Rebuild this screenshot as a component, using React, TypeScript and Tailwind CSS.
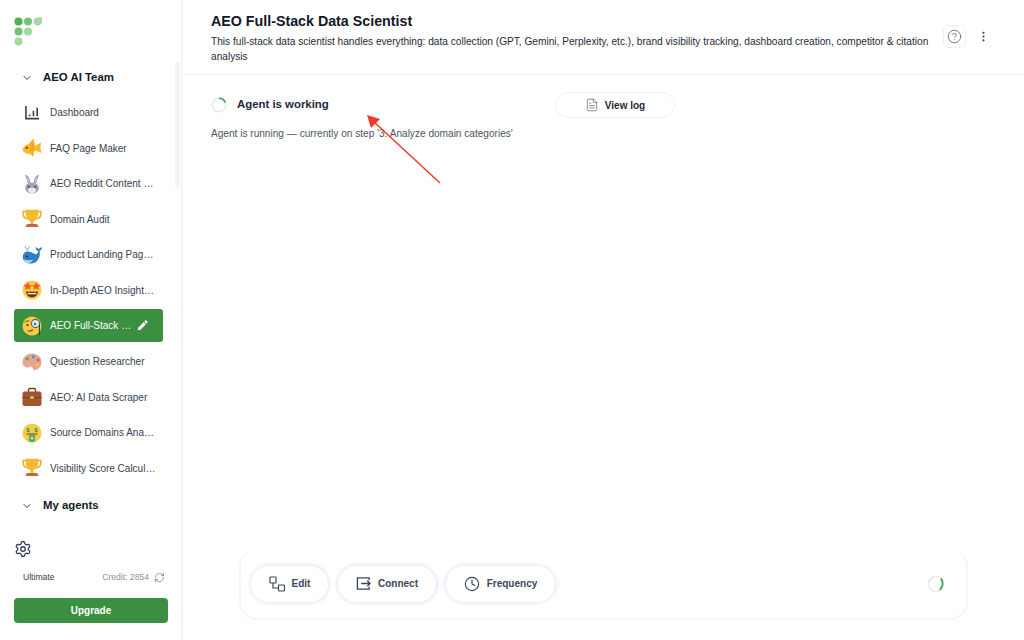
import { ChevronDown, Clock, FileText, RefreshCw, Settings, MoreVertical, CircleHelp } from "lucide-react";
import { type ReactNode } from "react";

const Face = ({ children }: { children: ReactNode }) => (
  <svg viewBox="0 0 20 20" className="w-[20px] h-[20px]">
    <circle cx="10" cy="10" r="9.500" fill="#fbc94b" />
    {children}
  </svg>
);

const Trophy = () => (
  <svg viewBox="0 0 20 20" className="w-[20px] h-[20px]">
    <path d="M4 2.500H1.200v2.500c0 3 2 4.500 5 5M16 2.500h2.800v2.500c0 3-2 4.500-5 5" fill="none" stroke="#f5ae2b" strokeWidth="1.700" />
    <path d="M3.500 .8h13c0 6-1.200 10-5 11.500v2.700h-3v-2.700c-3.800-1.500-5-5.500-5-11.500z" fill="#fab732" />
    <path d="M6 15h8c1.300 0 2.200 1.200 2.300 3H3.700c.1-1.800 1-3 2.300-3z" fill="#bd6a42" />
  </svg>
);

const Fish = () => (
  <svg viewBox="0 0 20 20" className="w-[20px] h-[20px]">
    <path d="M7 5.500 11.500 .8l1.500 7zM8 15l3 4 1.200-6z" fill="#f9a825" />
    <path d="M.5 11.500C2.500 6 9 3.500 13 8L19 4.500c-.8 3.500-.6 7 .8 10.500L13.500 12.500C9.500 18 2.500 16.500 .5 11.500z" fill="#fdb92e" />
    <path d="M8.500 7l2.500 2M7.500 10l3.500 1M8 13l3-1M10.500 6.500l1 5" stroke="#ee8d16" strokeWidth=".9" fill="none" />
    <circle cx="4.800" cy="9.800" r="1.100" fill="#5a3a12" />
  </svg>
);

const Rabbit = () => (
  <svg viewBox="0 0 20 20" className="w-[20px] h-[20px]">
    <path d="M6 9.500 3 .5c3 .8 5 3.500 5.300 8zM14 9.500 17 .5c-3 .8-5 3.500-5.300 8z" fill="#98a1ae" />
    <path d="M6.500 8 4.500 2.500c1.800 1 2.900 3 3 5.300zM13.500 8 15.500 2.500c-1.800 1-2.900 3-3 5.300z" fill="#e8bdb8" />
    <ellipse cx="10" cy="14" rx="6.800" ry="5.600" fill="#9aa3b0" />
    <ellipse cx="10" cy="16.300" rx="3.800" ry="2.800" fill="#eceef1" />
    <circle cx="6.800" cy="12.800" r=".9" fill="#2b2f36" />
    <circle cx="13.200" cy="12.800" r=".9" fill="#2b2f36" />
    <path d="M9 14.500h2l-1 1z" fill="#d98f8f" />
  </svg>
);

const Whale = () => (
  <svg viewBox="0 0 20 20" className="w-[20px] h-[20px]">
    <path d="M.8 12C.8 8 3.500 6.500 6.500 6.500c3.500 0 6 3.500 8 2.500 1.500-.7 1.800-2.500 1.500-4h1.300c1.700 5-.8 13.500-8.300 13.500-5 0-8.200-2.500-8.200-6.500z" fill="#2f7fc4" />
    <path d="M13.500 2.500c1.500 0 2.500 .5 3.200 1.700 .6-1.200 1.600-1.700 3.300-1.700-.2 2.300-1.500 3.500-3.300 3.500-1.700 0-2.900-1.200-3.200-3.500z" fill="#2f7fc4" />
    <path d="M3 1.200c.2 1.500 1 2.500 2.300 3 1.300-.5 2.100-1.500 2.300-3M5.300 4.200v1.800" stroke="#7cc0ee" strokeWidth="1.100" fill="none" />
    <path d="M1.500 14c2.500 1.500 6.500 1.800 9.500 .5-1.500 3-4 4.100-6 3.700-1.500-.4-2.800-2.200-3.500-4.200z" fill="#a9d6f5" />
    <circle cx="5" cy="11.500" r="1" fill="#12263a" />
  </svg>
);

const StarFace = () => (
  <Face>
    <path d="M10 11.500c2.500 .4 4.700 .3 6-.2-.5 4-3 6-6 6s-5.500-2-6-6c1.300 .5 3.500 .6 6 .2z" fill="#5b3512" />
    <path d="M5.500 12.700c3 .5 6 .5 9 0l-.5 1.500h-8z" fill="#fff" />
    <path d="M5.800 1.800l1.300 2.900 3.100 .3-2.300 2.100 .7 3-2.800-1.600L3 10.100l.7-3L1.400 5l3.100-.3zM14.200 1.800l1.300 2.900 3.100 .3-2.300 2.100 .7 3-2.800-1.600-2.800 1.600 .7-3L9.800 5l3.100-.3z" fill="#ef5f2b" />
  </Face>
);

const Monocle = () => (
  <svg viewBox="0 0 20 20" className="w-[20px] h-[20px]">
    <circle cx="10" cy="10" r="9.500" fill="#fbc94b" />
    <path d="M2.500 6.500c1-1.500 3-2 4.800-1.300" stroke="#7a4d12" strokeWidth="1" fill="none" />
    <circle cx="5.500" cy="9" r="1.100" fill="#4a3212" />
    <circle cx="13.500" cy="7.500" r="4.100" fill="#cfe9f6" stroke="#66614f" strokeWidth="1.100" />
    <circle cx="13" cy="8" r="1" fill="#4a3212" />
    <path d="M17.400 8.500v10.500" stroke="#33302a" strokeWidth="1" />
    <path d="M5.500 14.800c1.800 .5 4 .2 5.500-1" stroke="#7a4d12" strokeWidth="1.100" fill="none" />
  </svg>
);

const Palette = () => (
  <svg viewBox="0 0 20 20" className="w-[20px] h-[20px]">
    <path d="M10 1.500c5.500 0 9.500 3.700 9.500 8.500s-3.500 8-7 8c-2 0-1.500-2.300-2.500-3.300-1.500-1.200-3.500 1.500-6 .5C1.500 14 .5 12.500 .5 10.500 .5 5.500 4.500 1.500 10 1.500z" fill="#e5a68f" />
    <circle cx="5.300" cy="6.700" r="1.500" fill="#4fae4a" />
    <circle cx="11.300" cy="4.800" r="1.500" fill="#3d8fd8" />
    <circle cx="16" cy="8" r="1.500" fill="#e8503f" />
    <circle cx="15.300" cy="13" r="1.600" fill="#f7c33f" />
  </svg>
);

const Briefcase = () => (
  <svg viewBox="0 0 20 20" className="w-[20px] h-[20px]">
    <path d="M6.500 5V2.800c0-.7 .5-1.300 1.300-1.300h4.400c.8 0 1.300 .6 1.300 1.300V5" fill="none" stroke="#7a3f1c" strokeWidth="1.400" />
    <rect x=".5" y="4.500" width="19" height="14.500" rx="2" fill="#a5562a" />
    <rect x=".5" y="10" width="19" height="1" fill="#7a3b1e" />
    <rect x="8.200" y="9.500" width="3.600" height="2" rx=".4" fill="#eed6a8" />
  </svg>
);

const MoneyFace = () => (
  <Face>
    <text x="6" y="8.500" fontSize="6" fontWeight="700" fill="#2f8f46" textAnchor="middle" fontFamily="Liberation Sans">$</text>
    <text x="14" y="8.500" fontSize="6" fontWeight="700" fill="#2f8f46" textAnchor="middle" fontFamily="Liberation Sans">$</text>
    <path d="M4.500 11h11" stroke="#6b3c12" strokeWidth="1" />
    <rect x="7" y="11" width="6" height="8" rx="1.500" fill="#4eb05b" />
    <circle cx="10" cy="15" r="1.500" fill="#bfe8c2" />
  </Face>
);

// the little bar chart used for the Dashboard row
const DashboardGlyph = () => (
  <svg viewBox="0 0 16 16" className="w-[15px] h-[15px] text-[#374151]" fill="none" stroke="currentColor" strokeWidth="1.700">
    <path d="M1 1v13.500h14" />
    <path d="M5 12v-2M9 12V6M13 12V3" />
  </svg>
);

const PencilGlyph = () => (
  <svg viewBox="0 0 12 12" className="ml-[6px] w-[11px] h-[11px] shrink-0" fill="currentColor">
    <path d="M.8 11.200l.7-3.100 5.800-5.800 2.400 2.400-5.800 5.800zM8 1.600l.9-.9c.4-.4 1-.4 1.400 0l1 1c.4 .4 .4 1 0 1.400l-.9 .9z" />
  </svg>
);

const nav: { label: string; icon: ReactNode; active?: boolean }[] = [
  { label: "Dashboard", icon: <DashboardGlyph /> },
  { label: "FAQ Page Maker", icon: <Fish /> },
  { label: "AEO Reddit Content …", icon: <Rabbit /> },
  { label: "Domain Audit", icon: <Trophy /> },
  { label: "Product Landing Pag…", icon: <Whale /> },
  { label: "In-Depth AEO Insight…", icon: <StarFace /> },
  { label: "AEO Full-Stack …", icon: <Monocle />, active: true },
  { label: "Question Researcher", icon: <Palette /> },
  { label: "AEO: AI Data Scraper", icon: <Briefcase /> },
  { label: "Source Domains Ana…", icon: <MoneyFace /> },
  { label: "Visibility Score Calcul…", icon: <Trophy /> },
];

const Logo = () => (
  <svg viewBox="0 0 30 32" className="w-[30px] h-[32px]">
    <circle cx="4.500" cy="4.500" r="4" fill="#4caf50" />
    <circle cx="14" cy="4.500" r="4" fill="#74c278" />
    <path d="M19.500 4.500C19.500 2 21.500 .5 24 .5h4v4c0 2.300-1.800 4-4.200 4s-4.300-1.700-4.300-4z" fill="#a3d8a5" />
    <circle cx="4.500" cy="14.500" r="4" fill="#74c278" />
    <circle cx="14" cy="14.500" r="4" fill="#a3d8a5" />
    <circle cx="4.500" cy="24.500" r="4" fill="#a3d8a5" />
  </svg>
);

function Spinner({ size, arc }: { size: number; arc: string }) {
  return (
    <svg width={size} height={size} viewBox="0 0 20 20">
      <circle cx="10" cy="10" r="8.500" fill="none" stroke="#e8eaee" strokeWidth="1.800" />
      <path d={arc} fill="none" stroke="#34a853" strokeWidth="2" />
    </svg>
  );
}

const EditGlyph = () => (
  <svg viewBox="0 0 16 16" className="w-[16px] h-[16px]" fill="none" stroke="currentColor" strokeWidth="1.200">
    <rect x="1" y="1" width="6" height="6" rx=".8" />
    <rect x="9.500" y="9" width="6" height="6" rx=".8" />
    <path d="M4 7v5h5.500" />
  </svg>
);

const ConnectGlyph = () => (
  <svg viewBox="0 0 16 16" className="w-[15px] h-[15px]" fill="none" stroke="currentColor" strokeWidth="1.400">
    <path d="M14 4.500V2H1.500v12H14v-2.500" />
    <path d="M5.500 8H15M12 5l3 3-3 3" />
  </svg>
);

function PillButton({ icon, label, width }: { icon: ReactNode; label: string; width: string }) {
  return (
    <button className={`${width} h-[36px] rounded-full bg-white shadow-[0_0_4px_1px_rgba(210,218,235,0.7)] flex items-center justify-center gap-[7px] text-[10px] font-bold text-[#3b4658]`}>
      {icon}
      {label}
    </button>
  );
}

function Sidebar() {
  return (
    <aside className="relative w-[183px] shrink-0 h-full flex flex-col border-r-2 border-[#f3f5fb] bg-white">
      <div className="pt-[17px] pl-[14px] h-[67px]">
        <Logo />
      </div>
      <div className="flex items-center h-[22px] pl-[21px] gap-[10px] text-[11.400px] font-bold text-[#111827]">
        <ChevronDown className="w-[12px] h-[12px] text-[#374151]" strokeWidth={2} />
        AEO AI Team
      </div>
      <nav className="mt-[7px] flex flex-col gap-[2.580px]">
        {nav.map((item) => (
          <div
            key={item.label}
            className={`mx-[14px] w-[149px] h-[33px] shrink-0 flex items-center rounded-[3px] pl-[8px] ${item.active ? "bg-[#3b8f41] text-white" : "text-[#374151]"}`}
          >
            <span className="w-[20px] flex justify-center shrink-0">{item.icon}</span>
            <span className="ml-[8px] text-[10px] whitespace-nowrap">{item.label}</span>
            {item.active && <PencilGlyph />}
          </div>
        ))}
      </nav>
      <div className="mt-[10px] flex items-center h-[22px] pl-[21px] gap-[10px] text-[11.400px] font-bold text-[#111827]">
        <ChevronDown className="w-[12px] h-[12px] text-[#374151]" strokeWidth={2} />
        My agents
      </div>
      <div className="mt-auto px-[14px] pb-[17px] -mr-[1px]">
        <Settings className="w-[18px] h-[18px] text-[#334155]" strokeWidth={1.800} />
        <div className="mt-[13px] flex items-center justify-between pl-[9px] pr-[3px] text-[8.600px]">
          <span className="text-[#374151]">Ultimate</span>
          <span className="flex items-center gap-[5px] text-[#8b93a1]">
            Credit: 2854
            <RefreshCw className="w-[11px] h-[11px] text-[#6b7280]" strokeWidth={1.500} />
          </span>
        </div>
        <button className="mt-[14px] w-full h-[25px] rounded-[4px] bg-[#3b8f41] text-white text-[10px] font-bold">Upgrade</button>
      </div>
      <div className="absolute right-[1px] top-[62px] w-[5px] h-[126px] rounded-full bg-[#f3f4f7]" />
    </aside>
  );
}

function Main() {
  return (
    <main className="relative flex-1 h-full flex flex-col">
      <header className="h-[75px] shrink-0 border-b border-[#f3f4f6] pl-[28px] pr-[34px] flex">
        <div className="flex-1 pt-[12px]">
          <h1 className="text-[14.250px] leading-[18px] font-bold text-[#111827]">AEO Full-Stack Data Scientist</h1>
          <p className="mt-[4px] w-[725px] text-[10.150px] leading-[15px] text-[#1f2937]">
            This full-stack data scientist handles everything: data collection (GPT, Gemini, Perplexity, etc.), brand visibility tracking, dashboard creation, competitor &amp; citation analysis
          </p>
        </div>
        <div className="flex items-start gap-[11px] pt-[25px]">
          <button className="w-[23px] h-[23px] rounded-[6px] border border-[#eef0f4] flex items-center justify-center">
            <CircleHelp className="w-[15px] h-[15px] text-[#6b7280]" strokeWidth={1.500} />
          </button>
          <MoreVertical className="mt-[5px] w-[13px] h-[13px] text-[#374151]" strokeWidth={2} />
        </div>
      </header>
      <section className="flex-1 pl-[28px] pt-[17px]">
        <div className="flex items-center h-[26px] w-[464px]">
          <Spinner size={16} arc="M10 1.500a8.500 8.500 0 0 1 8 5.500" />
          <span className="ml-[10px] text-[11.400px] font-bold text-[#1f2937]">Agent is working</span>
          <button className="ml-auto w-[120px] h-[26px] rounded-full border border-[#eef0f6] flex items-center justify-center gap-[6px] text-[10px] font-bold text-[#1f2937]">
            <FileText className="w-[14px] h-[14px] text-[#6b7280]" strokeWidth={1.400} />
            View log
          </button>
        </div>
        <p className="mt-[8px] text-[10.100px] leading-[15px] text-[#4b5563]">Agent is running — currently on step '3. Analyze domain categories'</p>
      </section>
      <div className="mx-[56px] mb-[20px] h-[71px] shrink-0 rounded-[18px] border-2 border-t-0 border-[#f4f6fc] flex items-center pl-[10px] pr-[21px] gap-[10px]">
        <PillButton icon={<EditGlyph />} label="Edit" width="w-[77px]" />
        <PillButton icon={<ConnectGlyph />} label="Connect" width="w-[98px]" />
        <PillButton icon={<Clock className="w-[16px] h-[16px]" strokeWidth={1.700} />} label="Frequency" width="w-[109px]" />
        <div className="ml-auto">
          <Spinner size={18} arc="M15.500 4a9 9 0 0 1-1.500 12.500" />
        </div>
      </div>
      <svg className="absolute left-[170px] top-[105px] w-[100px] h-[90px]" viewBox="0 0 100 90">
        <path d="M87 78 20 16" stroke="#ee3b2b" strokeWidth="1.500" fill="none" />
        <path d="M14 10 27 14 18 23z" fill="#ee3b2b" />
      </svg>
    </main>
  );
}

export default function App() {
  return (
    <div className="w-[1024px] h-[640px] flex bg-white overflow-hidden font-['Liberation_Sans',Arial,sans-serif]">
      <Sidebar />
      <Main />
    </div>
  );
}
